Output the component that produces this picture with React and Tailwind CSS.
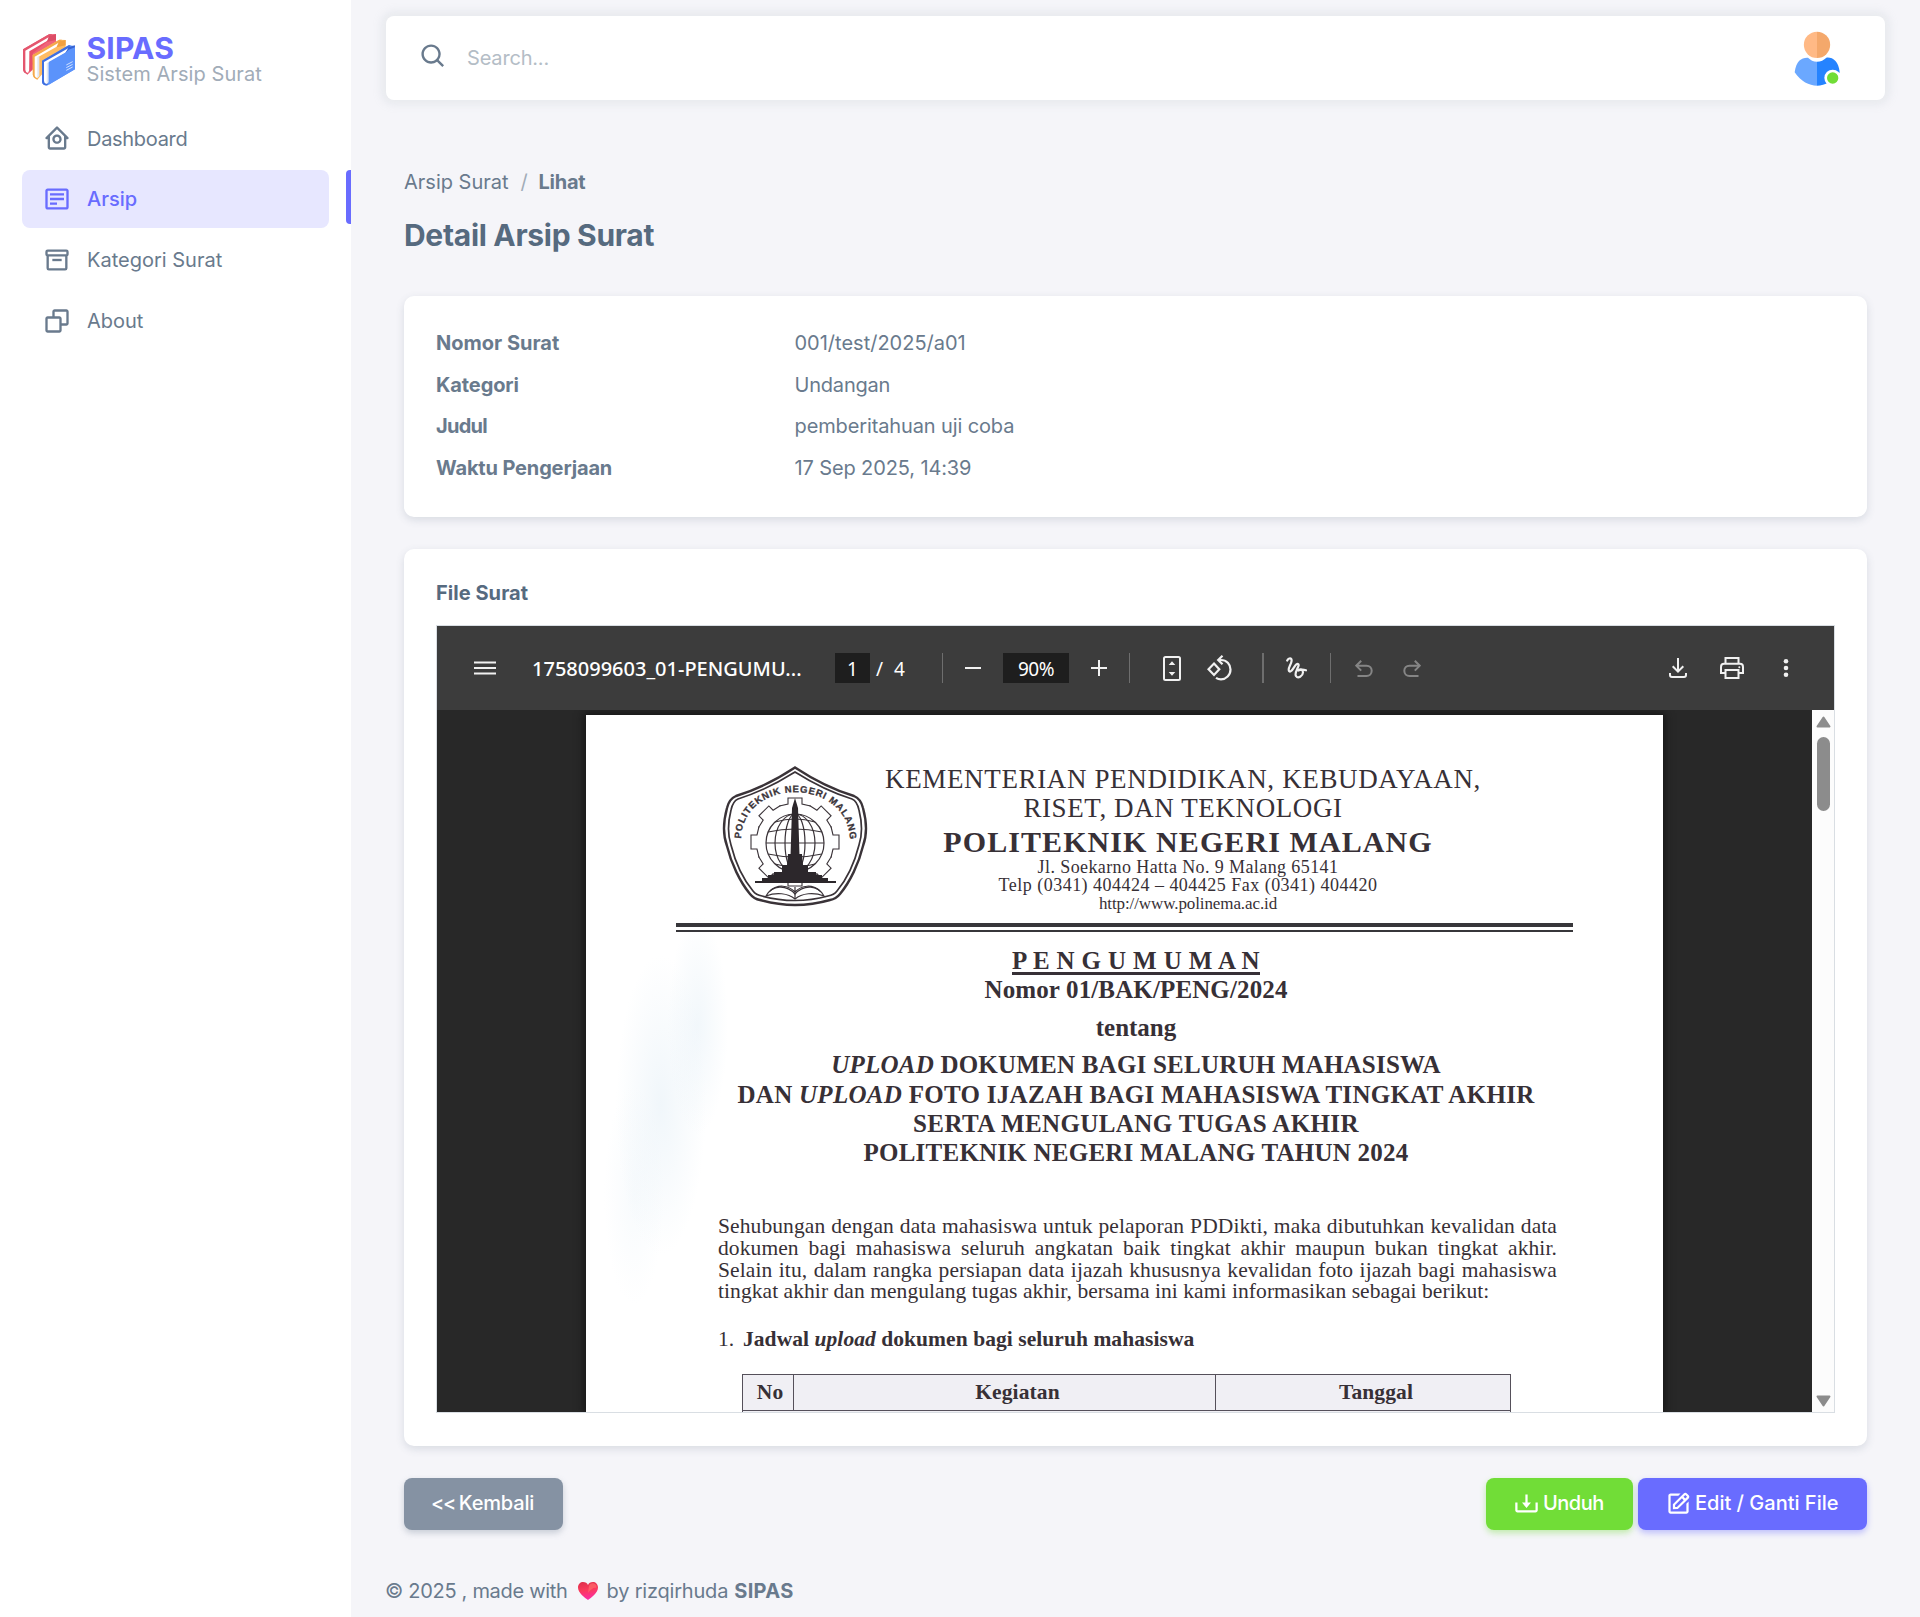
import { BiHomeCircle, BiDetail, BiBox, BiCopy, BiDownload, BiEdit, BiSearch } from "react-icons/bi";

/* ---------- Logos and drawings ---------- */

function BooksLogo() {
  return (
    <svg viewBox="66 97 162 160" className="h-[53.3px] w-[54px] shrink-0">
      <path d="M69 146 L147 101 L168 100 V150 L98 192 L98 207 L82 222 L70 212 Z" fill="#f0647a" />
      <path d="M69 146 L147 101 L156 100 L152 108 L84 150 L84 221 L73 216 L69 208 Z" fill="#e4566e" />
      <path d="M76 150 L146 110 L142 122 L90 153 L88 208 L84 216 Q78 218 76 208 Z" fill="#fff" />
      <path d="M148 106 L168 101 L168 118 L140 124 Z" fill="#dc4d66" />
      <path d="M88 152 L146 118 L138 126 L98 158 V206 L88 214 Z" fill="#e8506a" />
      <path d="M98 163 L178 117 L197 118 V150 L127 180 V220 L112 237 L100 228 Z" fill="#ffbc62" />
      <path d="M98 163 L178 117 L186 117 L180 126 L112 166 V237 L102 231 L98 222 Z" fill="#f5a94b" />
      <path d="M104 168 L176 126 L170 138 L116 168 V226 L112 232 Q105 233 104 224 Z" fill="#fff" />
      <path d="M112 170 L118 166 V226 L112 232 Z" fill="#e2e6f0" />
      <path d="M178 122 L197 118 V134 L170 140 Z" fill="#f2a03f" />
      <path d="M126 180 L206 134 L225 136 V206 L146 252 Q130 258 126 244 Z" fill="#5b93fb" />
      <path d="M126 180 L206 134 L212 134 L205 144 L143 184 V254 Q128 256 126 244 Z" fill="#3f6fe0" />
      <path d="M132 184 L206 142 L198 155 L146 184 V244 L141 249 Q133 251 132 241 Z" fill="#fff" />
      <path d="M140 188 L146 184 V244 L140 249 Z" fill="#dfe6f5" />
      <path d="M206 140 L225 134 L224 146 L196 158 Z" fill="#3763d2" />
      <path d="M146 186 L196 157 L206 147 L225 140 V206 L146 252 Z" fill="#5b93fb" />
      <path d="M199 193 L218 183 M199 201 L218 191 M199 209 L218 199" stroke="#cfe0ff" strokeWidth="3" />
    </svg>
  );
}

function Avatar() {
  return (
    <svg viewBox="161 94 140 168" className="h-[56px] w-[46.7px]">
      <path d="M230 96 a39.500 39.500 0 0 0 0 79 Z" fill="#ffb985" />
      <path d="M230 96 a39.500 39.500 0 0 1 0 79 Z" fill="#f4a86b" />
      <path d="M230 186 C219 186 210 181 203 174 C184 173 168 182 163 218 C182 246 206 258 230 258 Z" fill="#6ba8ff" />
      <path d="M230 186 C241 186 251 181 258 174 C277 172 295 184 298 218 C280 246 254 258 230 258 Z" fill="#2583ff" />
      <circle cx="277" cy="235" r="25" fill="#fff" />
      <circle cx="277" cy="235" r="17" fill="#71dd37" />
    </svg>
  );
}

function Heart() {
  return (
    <svg viewBox="0 0 20 18" className="h-[18px] w-[20px]">
      <defs>
        <linearGradient id="heart" x1="0.3" y1="0" x2="0.5" y2="1">
          <stop offset="0" stopColor="#e0304c" />
          <stop offset="0.45" stopColor="#fb3a5c" />
          <stop offset="1" stopColor="#fb2ba8" />
        </linearGradient>
      </defs>
      <path d="M10 18 C7 16 0 11 0 5.500 C0 2 2.500 0 5 0 C7.500 0 9.300 1.300 10 3 C10.700 1.300 12.500 0 15 0 C17.500 0 20 2 20 5.500 C20 11 13 16 10 18 Z" fill="url(#heart)" />
      <path d="M11 4 C12 1.500 14 1 16 1.500 C18 2 19 4 18.300 6 C16 5 13 7 10 11 Z" fill="#ff6b6b" opacity="0.7" />
    </svg>
  );
}

function PolinemaSeal() {
  const teeth = [0, 45, 90, 135, 180, 225, 270, 315];
  return (
    <svg viewBox="0 0 146 142" className="h-[142px] w-[146px] shrink-0" fill="none" stroke="#3a3338">
      <defs>
        <path id="seal-arc" d="M19 75 C19 10 127 10 128 75" />
      </defs>
      <path d="M73 1.500 C92 14 112 24 132 30 Q139 33 141 42 Q147 64 141 80 C137 97 128 116 118 128 Q114 133 108 134 Q73 144 38 134 Q32 133 28 128 C18 116 9 97 5 80 Q-1 64 5 42 Q7 33 14 30 C34 24 54 14 73 1.500 Z" strokeWidth="2.400" />
      <path d="M73 6 C92 18 111 27 130 33 Q135 35 137 44 Q142 64 137 79 C133 95 125 113 115 125 Q112 129 106 130 Q73 139 40 130 Q34 129 31 125 C21 113 13 95 9 79 Q4 64 9 44 Q11 35 16 33 C35 27 54 18 73 6 Z" strokeWidth="1.700" />
      <text fill="#3a3338" stroke="#3a3338" strokeWidth="0.3" className="font-['Liberation_Sans',sans-serif] text-[9.500px] font-bold">
        <textPath href="#seal-arc" textLength="160" startOffset="2">POLITEKNIK NEGERI MALANG</textPath>
      </text>
      <g strokeWidth="1.100">
        {teeth.map((a) => (
          <path key={a} transform={`rotate(${a} 73 76)`} d="M57.500 40 L66 38 V32 H80 V38 L88.500 40" />
        ))}
      </g>
      <g strokeWidth="1.200">
        <ellipse cx="73" cy="77" rx="29" ry="29" fill="#fff" />
        <ellipse cx="73" cy="77" rx="20" ry="29" />
        <ellipse cx="73" cy="77" rx="10" ry="29" />
        <path d="M46 66 Q73 60 100 66 M44 77 H102 M46 88 Q73 94 100 88 M53 56 Q73 50 93 56 M53 98 Q73 104 93 98" />
      </g>
      <g fill="#2c272b" stroke="none">
        <path d="M73 32 L76 42 L77.500 90 H68.500 L70 42 Z" />
        <path d="M66 88 H80 L81 99 H65 Z" />
        <path d="M60 99 H86 V106 H60 Z" />
        <path d="M52 106 H94 V109 H100 V112 H106 V115.500 H40 V112 H46 V109 H52 Z" />
        <path d="M33 115 H114 V117 H33 Z" />
      </g>
      <g strokeWidth="1.200">
        <path d="M44 130 C50 119 64 118 73 128 C82 118 96 119 102 130 C92 126 80 127 73 133 C66 127 54 126 44 130 Z" fill="#fff" />
        <path d="M48 125 C56 118 66 119 73 126 C80 119 90 118 98 125 M73 121 V132" />
      </g>
    </svg>
  );
}

/* ---------- PDF toolbar icons ---------- */

const MenuIcon = () => (
  <svg viewBox="0 0 22 16" className="h-[16px] w-[22px] shrink-0" stroke="#f1f1f1" strokeWidth="2">
    <path d="M0 2.500 H22 M0 8 H22 M0 13.500 H22" />
  </svg>
);
const MinusIcon = () => (
  <svg viewBox="0 0 16 16" className="h-[16px] w-[16px] shrink-0" stroke="#f1f1f1" strokeWidth="2">
    <path d="M0 8 H16" />
  </svg>
);
const PlusIcon = () => (
  <svg viewBox="0 0 16 16" className="h-[16px] w-[16px] shrink-0" stroke="#f1f1f1" strokeWidth="2">
    <path d="M0 8 H16 M8 0 V16" />
  </svg>
);
const FitIcon = () => (
  <svg viewBox="0 0 18 25" className="h-[25px] w-[18px] shrink-0">
    <rect x="1" y="1" width="16" height="23" rx="1.500" fill="none" stroke="#f1f1f1" strokeWidth="2" />
    <path d="M9 5.300 L12.300 9 H5.700 Z M9 19.700 L12.300 16 H5.700 Z" fill="#f1f1f1" />
  </svg>
);
const RotateIcon = () => (
  <svg viewBox="0 0 25 26" className="h-[26px] w-[25px] shrink-0" fill="none" stroke="#f1f1f1" strokeWidth="2.200">
    <path d="M7 8.500 L12.300 14.200 L7 20 L1.500 14.200 Z" />
    <path d="M11.500 5 H14 C19.500 5 23.500 9.300 23.500 14.500 C23.500 20 19 24.300 14 24.300 C12 24.300 10.500 23.800 9 22.800" />
    <path d="M15.500 0.800 L11.200 5 L15.500 9.300" />
  </svg>
);
const DrawIcon = () => (
  <svg viewBox="0 0 21 22" className="h-[22px] w-[21px] shrink-0" fill="none" stroke="#f1f1f1" strokeWidth="2.200" strokeLinecap="round">
    <path d="M1.200 3.500 C2.500 0.800 5.900 0.500 5.600 3.800 C5.200 8 1 12 3.200 14.200 C6 16.500 9 5.800 12 7 C14.800 8.300 7.500 15.500 10 19 C12 22.300 16.800 19 17 15.500 C17 12.500 14 11.300 12.200 13.500 M13 13.300 C15 12.300 18 12.700 20 13.300" />
  </svg>
);
const UndoIcon = ({ flip }) => (
  <svg viewBox="0 0 18 18" className={flip ? "h-[18px] w-[18px] shrink-0 -scale-x-100" : "h-[18px] w-[18px] shrink-0"} fill="none" stroke="#858585" strokeWidth="2">
    <path d="M6.200 0.800 L1.300 5.700 L6.200 10.600" />
    <path d="M1.500 5.700 H11.500 C14.800 5.700 16.700 8 16.700 10.800 C16.700 13.800 14.500 16 11.500 16 H2.500" />
  </svg>
);
const SaveIcon = () => (
  <svg viewBox="0 0 18 20" className="h-[20px] w-[18px] shrink-0" fill="none" stroke="#f1f1f1" strokeWidth="2">
    <path d="M9 0 V13 M3.700 8.300 L9 13.600 L14.300 8.300 M1 15 V17 Q1 19 3 19 H15 Q17 19 17 17 V15" />
  </svg>
);
const PrintIcon = () => (
  <svg viewBox="0 0 24 22" className="h-[22px] w-[24px] shrink-0" fill="none" stroke="#f1f1f1" strokeWidth="2">
    <path d="M5.500 6.500 V1 H18.500 V6.500" />
    <path d="M5.500 16 H1 V10 Q1 6.800 4 6.800 H20 Q23 6.800 23 10 V16 H18.500" />
    <path d="M5.500 13 H18.500 V21 H5.500 Z" />
    <circle cx="19.300" cy="10.300" r="1" fill="#f1f1f1" stroke="none" />
  </svg>
);
const MoreIcon = () => (
  <svg viewBox="0 0 6 20" className="h-[20px] w-[6px] shrink-0" fill="#f1f1f1">
    <circle cx="3" cy="3.200" r="2.300" />
    <circle cx="3" cy="10" r="2.300" />
    <circle cx="3" cy="16.800" r="2.300" />
  </svg>
);

/* ---------- Sidebar ---------- */

const menu = [
  { label: "Dashboard", Icon: BiHomeCircle, cls: "pt-[1px] tracking-[-0.300px]" },
  { label: "Arsip", Icon: BiDetail, active: true, cls: "mb-[1px]" },
  { label: "Kategori Surat", Icon: BiBox, cls: "mb-[1px]" },
  { label: "About", Icon: BiCopy, cls: "" },
];

function Sidebar() {
  return (
    <aside className="flex w-[351px] shrink-0 flex-col bg-white">
      <div className="flex h-[109px] items-start pl-[22px] pt-[32.500px]">
        <BooksLogo />
        <div className="ml-[10.500px]">
          <div className="h-[30px] text-[30px] font-bold leading-[31px] tracking-[0.200px] text-[#696cff]">SIPAS</div>
          <div className="text-[20px] leading-[22.500px] tracking-[0.080px] text-[#a1acb8]">Sistem Arsip Surat</div>
        </div>
      </div>
      <nav className="flex flex-col gap-[3px]">
        {menu.map(({ label, Icon, active, cls }) => (
          <div key={label} className="flex justify-between">
            <a className={`ml-[22px] flex h-[58px] w-[307px] items-center gap-[16px] rounded-lg pl-[21px] ${active ? "bg-[#e7e7ff] font-medium text-[#696cff]" : "text-[#697a8d]"}`}>
              <Icon className="size-[28px]" />
              <span className={cls}>{label}</span>
            </a>
            {active && <span className="h-[54px] w-[5px] rounded-l bg-[#696cff]" />}
          </div>
        ))}
      </nav>
    </aside>
  );
}

/* ---------- Scanned letter shown in the viewer ---------- */

function Letter() {
  return (
    <div className="mt-[5px] h-[697px] w-[1077px] bg-white bg-[radial-gradient(ellipse_30px_110px_at_112px_310px,rgba(226,238,246,0.450),transparent),radial-gradient(ellipse_45px_150px_at_75px_390px,rgba(226,238,246,0.500),transparent),radial-gradient(ellipse_30px_110px_at_48px_480px,rgba(226,238,246,0.250),transparent)] font-['Liberation_Serif',serif] whitespace-nowrap text-[#373036] shadow-[0_0_8px_2px_#151515]">
      <div className="flex h-[208px] pl-[136px]">
        <div className="pt-[51px]">
          <PolinemaSeal />
        </div>
        <div className="ml-[17px] w-[596px] pt-[50px] text-center">
          <div className="text-[27px] leading-[29px] tracking-[0.640px]">KEMENTERIAN PENDIDIKAN, KEBUDAYAAN,</div>
          <div className="text-[27px] leading-[29px] tracking-[0.600px]">RISET, DAN TEKNOLOGI</div>
          <div className="pl-[10px] text-[30px] font-bold leading-[37px] tracking-[1.080px]">POLITEKNIK NEGERI MALANG</div>
          <div className="-mt-[2px] pl-[10px] text-[18px] leading-[18px]">
            <div className="tracking-[0.400px]">Jl. Soekarno Hatta No. 9 Malang 65141</div>
            <div className="tracking-[0.480px]">Telp (0341) 404424 – 404425 Fax (0341) 404420</div>
            <div className="pt-[1px] text-[17px] tracking-[-0.100px]">http://www.polinema.ac.id</div>
          </div>
        </div>
      </div>
      <div className="ml-[90px] h-[9px] w-[897px] border-t-4 border-b-2 border-[#37363a]" />

      <div className="ml-[90px] w-[920px] pt-[14px] text-center text-[25px] font-bold leading-[29px]">
        <div>
          <span className="tracking-[0.370px] underline decoration-[3px] underline-offset-[3px]">P E N G U M U M A N</span>
        </div>
        <div className="tracking-[0.130px]">Nomor 01/BAK/PENG/2024</div>
        <div className="mt-[9px]">tentang</div>
        <div className="mt-[8px] tracking-[0.220px]"><i>UPLOAD</i> DOKUMEN BAGI SELURUH MAHASISWA</div>
        <div className="mt-[1px] tracking-[0.290px]">DAN <i>UPLOAD</i> FOTO IJAZAH BAGI MAHASISWA TINGKAT AKHIR</div>
        <div className="tracking-[0.400px]">SERTA MENGULANG TUGAS AKHIR</div>
        <div className="tracking-[0.240px]">POLITEKNIK NEGERI MALANG TAHUN 2024</div>
      </div>

      <div className="ml-[132px] mt-[49px] w-[839px] text-[21.500px] leading-[21.750px]">
        <div className="tracking-[0.100px] [text-align-last:justify]">Sehubungan dengan data mahasiswa untuk pelaporan PDDikti, maka dibutuhkan kevalidan data</div>
        <div className="tracking-[0.100px] [text-align-last:justify]">dokumen bagi mahasiswa seluruh angkatan baik tingkat akhir maupun bukan tingkat akhir.</div>
        <div className="tracking-[0.100px] [text-align-last:justify]">Selain itu, dalam rangka persiapan data ijazah khususnya kevalidan foto ijazah bagi mahasiswa</div>
        <div className="tracking-[0.065px]">tingkat akhir dan mengulang tugas akhir, bersama ini kami informasikan sebagai berikut:</div>
      </div>

      <div className="ml-[132px] mt-[25px] flex text-[21.500px] leading-[22px]">
        <span className="w-[25px]">1.</span>
        <b className="tracking-[0.060px]">Jadwal <i>upload</i> dokumen bagi seluruh mahasiswa</b>
      </div>

      <div className="ml-[156px] mt-[24px] h-[39px] w-[769px] border-x border-t border-[#55505a] bg-[#f0eff4]">
        <div className="flex h-[36px] border-b-[1.500px] border-[#55505a] text-center text-[21.500px] font-bold leading-[34px]">
          <span className="w-[51px] border-r border-[#55505a] pl-1">No</span>
          <span className="w-[422px] border-r border-[#55505a] pl-[26px] tracking-[0.100px]">Kegiatan</span>
          <span className="grow pl-[26px] tracking-[0.100px]">Tanggal</span>
        </div>
      </div>
    </div>
  );
}

/* ---------- Embedded PDF viewer ---------- */

const Divider = ({ className }) => <span className={`h-[30px] shrink-0 bg-[#6e6e6e] ${className}`} />;

function PdfViewer() {
  return (
    <div className="h-[788px] w-[1399px] overflow-hidden border border-[#d9dee3] bg-[#282828]">
      <div className="flex h-[84px] items-center whitespace-nowrap bg-[#3c3c3c] pl-[37px] pr-[45px] font-['Noto_Sans',sans-serif] text-[19px] text-white">
        <MenuIcon />
        <span className="ml-[36px] mt-[2px] w-[303px] shrink-0 text-[20px] font-medium">1758099603_01-PENGUMU...</span>
        <span className="h-[30px] w-[35px] shrink-0 bg-[#1e1e1e] text-center leading-[32px]">1</span>
        <span className="ml-[6px] mt-[2px] w-[18px] shrink-0">/</span>
        <span className="mt-[2px] w-[11px] shrink-0">4</span>
        <Divider className="ml-[37px] w-px" />
        <span className="ml-[22px] flex"><MinusIcon /></span>
        <span className="ml-[22px] h-[30px] w-[66px] shrink-0 bg-[#1e1e1e] text-center leading-[32px] tracking-[-0.500px]">90%</span>
        <span className="ml-[22px] flex"><PlusIcon /></span>
        <Divider className="ml-[22px] w-px" />
        <span className="ml-[33px] flex"><FitIcon /></span>
        <span className="ml-[26px] flex"><RotateIcon /></span>
        <Divider className="ml-[30px] w-[2px]" />
        <span className="ml-[22px] mr-[1px] flex"><DrawIcon /></span>
        <Divider className="ml-[22px] w-px" />
        <span className="ml-[24px] mt-[2px] flex"><UndoIcon /></span>
        <span className="ml-[30px] mt-[2px] flex"><UndoIcon flip /></span>
        <span className="ml-auto flex"><SaveIcon /></span>
        <span className="ml-[33px] flex"><PrintIcon /></span>
        <span className="ml-[39px] flex"><MoreIcon /></span>
      </div>
      <div className="flex h-[702px] justify-between overflow-hidden pl-[149px]">
        <Letter />
        <div className="z-10 flex w-[22px] flex-col items-center bg-[#fcfcfc] pb-[5px] pt-[6px]">
          <svg viewBox="0 0 15 12" className="h-[12px] w-[15px]" fill="#8c8c8c" stroke="#8c8c8c" strokeWidth="2" strokeLinejoin="round">
            <path d="M7.500 1.500 L13.500 10.500 H1.500 Z" />
          </svg>
          <span className="mt-[9px] h-[74px] w-[13px] rounded-full bg-[#8c8c8c]" />
          <svg viewBox="0 0 15 12" className="mt-auto h-[12px] w-[15px]" fill="#8c8c8c" stroke="#8c8c8c" strokeWidth="2" strokeLinejoin="round">
            <path d="M7.500 10.500 L13.500 1.500 H1.500 Z" />
          </svg>
        </div>
      </div>
    </div>
  );
}

/* ---------- Page ---------- */

const details = [
  { label: "Nomor Surat", value: "001/test/2025/a01", l: "", v: "" },
  { label: "Kategori", value: "Undangan", l: "tracking-[-0.100px]", v: "tracking-[-0.200px]" },
  { label: "Judul", value: "pemberitahuan uji coba", l: "tracking-[-0.750px]", v: "tracking-[-0.120px]" },
  { label: "Waktu Pengerjaan", value: "17 Sep 2025, 14:39", l: "tracking-[-0.150px]", v: "tracking-[-0.120px]" },
];

const card = "rounded-[10px] bg-white shadow-[0_3px_8px_0_rgba(67,89,113,0.160)]";
const btn = "flex h-[52px] items-center rounded-lg pb-[2px] font-medium text-white";

export default function App() {
  return (
    <div className="flex h-[1617px] w-[1920px] overflow-hidden bg-[#f5f5f9] font-['Inter',sans-serif] text-[20px] leading-[30px] text-[#697a8d]">
      <Sidebar />
      <main className="flex grow flex-col pl-[35px] pr-[35px] pt-[16px]">
        <header className="flex h-[84px] items-center rounded-lg bg-white pl-[33px] pr-[44px] shadow-[0_0_8px_5px_rgba(161,172,184,0.150)]">
          <BiSearch className="mb-[3px] size-[29px]" />
          <span className="ml-[19px] tracking-[-0.180px] text-[#b4bdc6]">Search...</span>
          <span className="ml-auto mt-[2px]"><Avatar /></span>
        </header>

        <div className="flex flex-col px-[18px]">
          <div className="mt-[67px] flex">
            <span>Arsip Surat</span>
            <span className="w-[30px] pl-[12px] text-[#a1acb8]">/</span>
            <span className="font-bold tracking-[-0.250px]">Lihat</span>
          </div>
          <h1 className="mt-[20px] text-[30px] font-bold leading-[36px] tracking-[-0.300px] text-[#566a7f]">Detail Arsip Surat</h1>

          <section className={`mt-[43px] flex h-[221px] flex-col pl-[32px] pt-[26px] ${card}`}>
            {details.map((d) => (
              <div key={d.label} className="flex h-[41.750px] items-center">
                <span className={`w-[358.500px] font-bold ${d.l}`}>{d.label}</span>
                <span className={d.v}>{d.value}</span>
              </div>
            ))}
          </section>

          <section className={`mt-[32px] h-[897px] pl-[32px] pt-[29px] ${card}`}>
            <h2 className="h-[47px] font-bold tracking-[0.050px] text-[#566a7f]">File Surat</h2>
            <PdfViewer />
          </section>

          <div className="mt-[32px] flex">
            <button className={`${btn} w-[159px] bg-[#8592a3] pl-[27px] shadow-[0_3px_6px_0_rgba(133,146,163,0.400)]`}>
              <span className="tracking-[-1.400px]">&lt;&lt;&nbsp;</span>
              <span className="tracking-[-0.150px]">Kembali</span>
            </button>
            <button className={`${btn} ml-auto w-[147px] bg-[#71dd37] pl-[27px] tracking-[-0.500px] shadow-[0_3px_6px_0_rgba(113,221,55,0.400)]`}>
              <BiDownload className="mr-[3px] size-[27px]" />
              Unduh
            </button>
            <button className={`${btn} ml-[5px] w-[229px] bg-[#696cff] pl-[27px] shadow-[0_3px_6px_0_rgba(105,108,255,0.400)]`}>
              <BiEdit className="mr-[3px] size-[27px]" />
              Edit / Ganti File
            </button>
          </div>
        </div>

        <footer className="mt-[46px] flex items-center whitespace-pre">
          <span className="-ml-[1px] tracking-[-0.300px]">© 2025 , made with</span>
          <span className="ml-[10px] mr-[9px]"><Heart /></span>
          <span className="tracking-[-0.200px]">by rizqirhuda</span>
          <span className="ml-[6px] font-bold tracking-[0.350px]">SIPAS</span>
        </footer>
      </main>
    </div>
  );
}
